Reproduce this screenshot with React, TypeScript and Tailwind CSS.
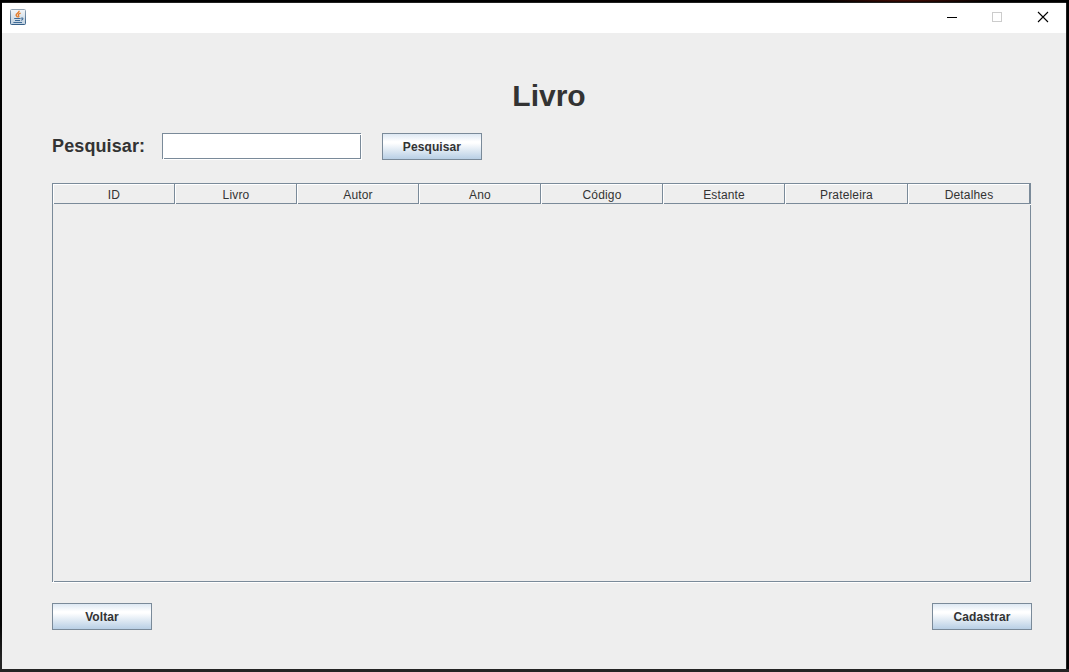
const columns = ["ID", "Livro", "Autor", "Ano", "Código", "Estante", "Prateleira", "Detalhes"];

function MetalButton({ label }: { label: string }) {
  return (
    <button
      type="button"
      className="h-[27px] w-[100px] border border-[#7a8a99] bg-[linear-gradient(to_bottom,#dde8f3_0%,#ffffff_30%,#ffffff_36%,#b8cfe5_100%)] pt-px text-center text-[12px] leading-[24px] font-bold tracking-[0.1px] text-[#333333]"
    >
      {label}
    </button>
  );
}

function JavaIcon() {
  return (
    <svg width="16" height="16" viewBox="0 0 16 16" className="block">
      <defs>
        <linearGradient id="tile" x1="0" y1="0" x2="0" y2="1">
          <stop offset="0" stopColor="#f4f6f8" />
          <stop offset="1" stopColor="#bfd0df" />
        </linearGradient>
        <linearGradient id="rim" x1="0" y1="0" x2="0" y2="1">
          <stop offset="0" stopColor="#94a5b5" />
          <stop offset="1" stopColor="#365f88" />
        </linearGradient>
      </defs>
      <rect x="0.5" y="0.5" width="15" height="15" rx="1" fill="url(#tile)" stroke="url(#rim)" />
      <path d="M9.2 1.8 C9.4 4 5.8 4.4 6.1 6.1 C6.3 7.1 7.4 7.3 7.6 8.4 M10.6 4.2 C8.6 5 7.7 5.6 8.6 6.6 C9.1 7.2 9 7.8 8.4 8.4" fill="none" stroke="#e67a25" strokeWidth="1.3" />
      <path d="M4.2 9.5 H10.6 M5 11.5 H10 M11 9.3 C13.6 8.2 13.6 10.8 10.9 11.3 M3.4 13.5 H12" fill="none" stroke="#3f6c98" strokeWidth="1.1" />
    </svg>
  );
}

export default function App() {
  return (
    <div className="h-[672px] w-[1069px] overflow-hidden bg-[radial-gradient(ellipse_90px_3px_at_905px_0px,#4a0d04,transparent),linear-gradient(to_bottom,#000000_0%,#050505_93%,#242424_98%)] pt-[3px] pl-[2px] font-['Liberation_Sans',Arial,sans-serif] text-[#333333]">
      <div className="flex h-[666px] w-[1064px] flex-col bg-[#eeeeee] shadow-[1px_0_0_#202020,0_-1px_0_#202020,5px_0_0_#000000,0_3px_0_#242424]">
        <header className="flex h-[30px] shrink-0 items-center justify-between bg-white pr-[17px] pl-[8px]">
          <div className="pb-[2px]">
            <JavaIcon />
          </div>
          <svg width="102" height="12" viewBox="0 0 102 12" className="mb-[2px] block" shapeRendering="crispEdges">
            <rect x="0" y="6" width="10" height="1" fill="#000000" />
            <rect x="45.5" y="1.5" width="9" height="9" fill="none" stroke="#cccccc" />
            <path d="M91 1 L101 11 M101 1 L91 11" stroke="#000000" strokeWidth="1.1" shapeRendering="auto" />
          </svg>
        </header>

        <main className="flex flex-1 flex-col pr-[34px] pl-[50px]">
          <h1 className="mt-[46px] pl-[14px] text-center text-[30px] leading-[34px] font-bold">Livro</h1>

          <div className="mt-[20px] flex h-[27px] items-start">
            <label htmlFor="search" className="w-[110px] pt-px text-[18px] leading-[25px] font-bold tracking-[0.12px]">
              Pesquisar:
            </label>
            <div className="relative mr-[21px] h-[26px] w-[199px]">
              <input
                id="search"
                className="block h-[26px] w-[199px] border border-[#7a8a99] bg-white px-1 text-[12px] shadow-[1px_1px_0_#ffffff] outline-none"
              />
              <span className="absolute bottom-0 left-px size-px bg-white" />
              <span className="absolute top-px right-0 size-px bg-white" />
            </div>
            <MetalButton label="Pesquisar" />
          </div>

          <div className="relative mt-[23px] h-[399px] w-[979px] border border-[#7a8a99] shadow-[0_1px_0_#ffffff]">
            <table className="w-[977px] table-fixed border-separate border-spacing-0">
              <colgroup>
                <col className="w-[122px]" />
                <col className="w-[122px]" />
                <col className="w-[122px]" />
                <col className="w-[122px]" />
                <col className="w-[122px]" />
                <col className="w-[122px]" />
                <col className="w-[123px]" />
                <col className="w-[122px]" />
              </colgroup>
              <thead>
                <tr>
                  {columns.map((name) => (
                    <th key={name} className="p-0 font-normal">
                      <div className="h-[20px] border-r border-[#7a8a99] bg-white pt-px pl-px">
                        <div className="h-[19px] border-b border-[#7a8a99] bg-[#eeeeee] pt-px text-center text-[12px] leading-[18px] tracking-[0.15px]">
                          {name}
                        </div>
                      </div>
                    </th>
                  ))}
                </tr>
              </thead>
            </table>
            <span className="absolute -bottom-px left-0 size-px bg-white" />
            <span className="absolute top-[20px] -right-px size-px bg-white" />
          </div>

          <footer className="mt-[21px] flex w-[980px] justify-between">
            <MetalButton label="Voltar" />
            <MetalButton label="Cadastrar" />
          </footer>
        </main>
      </div>
    </div>
  );
}
